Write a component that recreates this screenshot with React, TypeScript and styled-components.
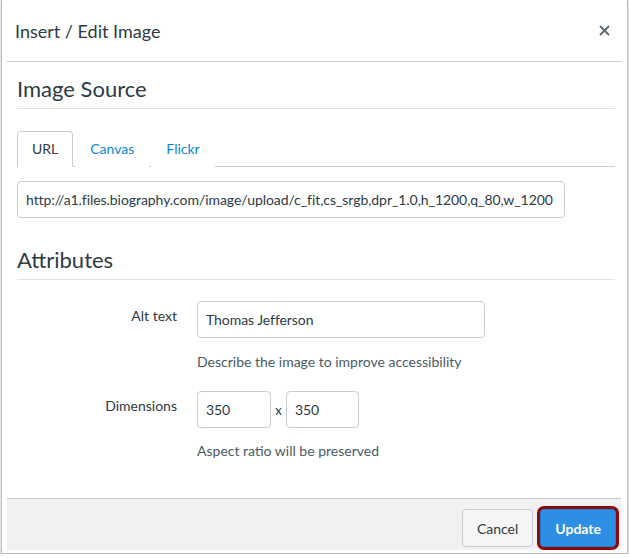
import styled, { createGlobalStyle } from "styled-components";

const GlobalStyle = createGlobalStyle`
  html, body {
    margin: 0;
    padding: 0;
    background: #ffffff;
  }
  body {
    font-family: Lato, "Open Sans", "Liberation Sans", sans-serif;
    color: #2d3b45;
  }
  * {
    box-sizing: border-box;
  }
`;

const Dialog = styled.div`
  margin-left: 1px;
  width: 627px;
  height: 554px;
  display: flex;
  flex-direction: column;
  background: #ffffff;
  border: 1px solid #b9bdc1;
  border-top: none;
  padding: 0 6px 3px 5px;
  box-shadow: 0 1px 3px rgba(0, 0, 0, 0.25);
`;

const Header = styled.div`
  height: 62px;
  display: flex;
  align-items: center;
  justify-content: space-between;
  padding: 0 9px 0 8px;
  border-bottom: 1px solid #c7cdd1;
`;

const Title = styled.h1`
  margin: 0;
  font-size: 18px;
  font-weight: 400;
  line-height: 22px;
  color: #2d3b45;
`;

const CloseButton = styled.button`
  width: 16px;
  height: 16px;
  padding: 0;
  border: none;
  background: none;
  display: flex;
  align-items: center;
  justify-content: center;
  cursor: pointer;
`;

const Body = styled.div`
  flex: 1;
  padding: 13px 6px 0 10px;
`;

const SectionHeading = styled.h2<{ $top?: number }>`
  margin: ${(p) => p.$top ?? 0}px 0 0;
  padding-bottom: 6px;
  font-size: 22px;
  font-weight: 400;
  line-height: 27px;
  color: #2d3b45;
  border-bottom: 1px solid #dfe2e4;
`;

const TabList = styled.div`
  margin-top: 22px;
  display: flex;
  border-bottom: 1px solid #c7cdd1;
`;

const Tab = styled.button<{ $active?: boolean }>`
  margin: 0 2px -1px 0;
  padding: 7px 14px;
  font-family: inherit;
  font-size: 14px;
  line-height: 20px;
  background: #ffffff;
  color: ${(p) => (p.$active ? "#2d3b45" : "#0a88d8")};
  border: 1px solid ${(p) => (p.$active ? "#c7cdd1" : "transparent")};
  border-bottom-color: ${(p) => (p.$active ? "#ffffff" : "transparent")};
  border-radius: 4px 4px 0 0;
  cursor: pointer;
`;

const TextInput = styled.input<{ $width: number }>`
  display: block;
  width: ${(p) => p.$width}px;
  height: 37px;
  padding: 0 7px 0 8px;
  font-family: inherit;
  font-size: 14px;
  letter-spacing: -0.06px;
  color: #2d3b45;
  background: #ffffff;
  border: 1px solid #c7cdd1;
  border-radius: 4px;
  outline: none;
`;

const UrlRow = styled.div`
  margin-top: 14px;
`;

const Form = styled.div`
  margin-top: 21px;
  display: grid;
  grid-template-columns: 160px 1fr;
  column-gap: 20px;
  row-gap: 19px;
`;

const Label = styled.label`
  padding-top: 5px;
  text-align: right;
  font-size: 14px;
  line-height: 20px;
  color: #2d3b45;
`;

const Control = styled.div`
  display: flex;
  flex-direction: column;
`;

const Inline = styled.div`
  display: flex;
  align-items: center;
`;

const Times = styled.span`
  width: 15px;
  text-align: center;
  font-size: 13px;
  color: #2d3b45;
`;

const Hint = styled.div<{ $top: number }>`
  margin-top: ${(p) => p.$top}px;
  font-size: 14px;
  line-height: 20px;
  color: #4a5b68;
`;

const Footer = styled.div`
  height: 52px;
  display: flex;
  justify-content: flex-end;
  align-items: flex-start;
  gap: 7px;
  padding: 10px 5px 0 0;
  background: #f1f1f1;
  border-top: 1px solid #c7cdd1;
`;

const Button = styled.button<{ $primary?: boolean }>`
  height: 38px;
  padding: 0 14px;
  font-family: inherit;
  font-size: 14px;
  font-weight: ${(p) => (p.$primary ? 700 : 400)};
  color: ${(p) => (p.$primary ? "#ffffff" : "#2d3b45")};
  background: ${(p) => (p.$primary ? "#2d8fe4" : "#f5f5f5")};
  border: 1px solid ${(p) => (p.$primary ? "#2283d6" : "#c7cdd1")};
  border-radius: 4px;
  box-shadow: ${(p) => (p.$primary ? "0 0 0 3px #8b0a0f" : "none")};
  cursor: pointer;
`;

const CloseIcon = () => (
  <svg width="11" height="11" viewBox="0 0 11 11">
    <path d="M1.5 1.5 L9.5 9.5 M9.5 1.5 L1.5 9.5" stroke="#5b6670" strokeWidth="1.8" strokeLinecap="round" />
  </svg>
);

const url =
  "http://a1.files.biography.com/image/upload/c_fit,cs_srgb,dpr_1.0,h_1200,q_80,w_1200";

export default function App() {
  return (
    <>
      <GlobalStyle />
      <Dialog>
        <Header>
          <Title>Insert / Edit Image</Title>
          <CloseButton aria-label="Close">
            <CloseIcon />
          </CloseButton>
        </Header>
        <Body>
          <SectionHeading>Image Source</SectionHeading>
          <TabList>
            <Tab $active>URL</Tab>
            <Tab>Canvas</Tab>
            <Tab>Flickr</Tab>
          </TabList>
          <UrlRow>
            <TextInput $width={548} defaultValue={url} />
          </UrlRow>
          <SectionHeading $top={28}>Attributes</SectionHeading>
          <Form>
            <Label>Alt text</Label>
            <Control>
              <TextInput $width={288} defaultValue="Thomas Jefferson" />
              <Hint $top={14}>Describe the image to improve accessibility</Hint>
            </Control>
            <Label>Dimensions</Label>
            <Control>
              <Inline>
                <TextInput $width={74} defaultValue="350" />
                <Times>x</Times>
                <TextInput $width={73} defaultValue="350" />
              </Inline>
              <Hint $top={13}>Aspect ratio will be preserved</Hint>
            </Control>
          </Form>
        </Body>
        <Footer>
          <Button>Cancel</Button>
          <Button $primary>Update</Button>
        </Footer>
      </Dialog>
    </>
  );
}
